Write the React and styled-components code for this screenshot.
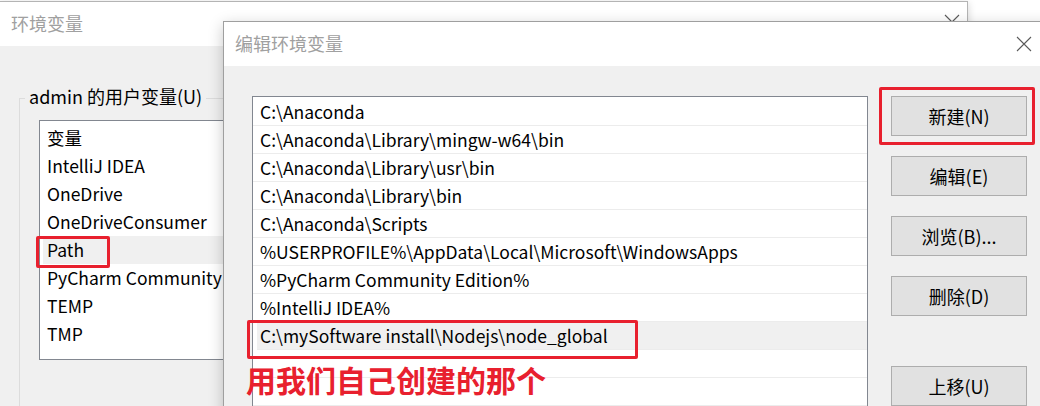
import React from 'react';
import styled, { createGlobalStyle } from 'styled-components';

const GlobalStyle = createGlobalStyle`
  html, body {
    margin: 0;
    padding: 0;
    background: #ffffff;
    overflow: hidden;
  }
  body {
    font-family: "Noto Sans CJK SC", "Microsoft YaHei", sans-serif;
    font-size: 17.5px;
    color: #000;
  }
`;

const userVars = [
  '变量',
  'IntelliJ IDEA',
  'OneDrive',
  'OneDriveConsumer',
  'Path',
  'PyCharm Community Edition',
  'TEMP',
  'TMP',
];

const pathItems = [
  'C:\\Anaconda',
  'C:\\Anaconda\\Library\\mingw-w64\\bin',
  'C:\\Anaconda\\Library\\usr\\bin',
  'C:\\Anaconda\\Library\\bin',
  'C:\\Anaconda\\Scripts',
  '%USERPROFILE%\\AppData\\Local\\Microsoft\\WindowsApps',
  '%PyCharm Community Edition%',
  '%IntelliJ IDEA%',
  'C:\\mySoftware install\\Nodejs\\node_global',
  '',
  '',
];

const buttons = [
  { label: '新建(N)' },
  { label: '编辑(E)' },
  { label: '浏览(B)...' },
  { label: '删除(D)' },
  { label: '上移(U)', spaced: true },
];

function CloseIcon({ size = 16 }) {
  return (
    <svg width={size} height={size} viewBox="0 0 16 16">
      <path d="M1 1 L15 15 M15 1 L1 15" stroke="#5a5a5a" strokeWidth="1.1" fill="none" />
    </svg>
  );
}

export default function App() {
  return (
    <>
      <GlobalStyle />
      <S.Desktop>
        <S.BackWindow>
          <S.TitleBar>
            <S.Title>环境变量</S.Title>
            <S.Close right={-3} up={2}>
              <CloseIcon size={16} />
            </S.Close>
          </S.TitleBar>
          <S.BackBody>
            <S.Group>
              <S.Legend>admin 的用户变量(U)</S.Legend>
              <S.UserList>
                {userVars.map((v) => (
                  <S.UserRow key={v} selected={v === 'Path'}>
                    {v}
                  </S.UserRow>
                ))}
              </S.UserList>
            </S.Group>
          </S.BackBody>
        </S.BackWindow>

        <S.FrontWindow>
          <S.TitleBar>
            <S.Title>编辑环境变量</S.Title>
            <S.Close right={22}>
              <CloseIcon size={16} />
            </S.Close>
          </S.TitleBar>
          <S.FrontBody>
            <S.PathList>
              {pathItems.map((p, i) => (
                <S.PathRow key={i} selected={i === 8}>
                  {p}
                </S.PathRow>
              ))}
            </S.PathList>
            <S.ButtonColumn>
              {buttons.map((b) => (
                <S.Button key={b.label} spaced={b.spaced}>
                  {b.label}
                </S.Button>
              ))}
            </S.ButtonColumn>
          </S.FrontBody>
        </S.FrontWindow>

        <S.Mark style={{ left: 36, top: 236, width: 74, height: 32 }} />
        <S.Mark style={{ left: 247, top: 320, width: 391, height: 39 }} />
        <S.Mark style={{ left: 879, top: 87, width: 156, height: 58 }} />
        <S.Note>用我们自己创建的那个</S.Note>
      </S.Desktop>
    </>
  );
}

const S = {
  Desktop: styled.div`
    position: relative;
    width: 1040px;
    height: 406px;
    overflow: hidden;
    background: #ffffff;
  `,
  BackWindow: styled.div`
    position: absolute;
    left: -1px;
    top: 1px;
    width: 967px;
    height: 460px;
    border: 1px solid #b4b4b4;
    box-shadow: 0 2px 8px rgba(0, 0, 0, 0.18);
    background: #f0f0f0;
    display: flex;
    flex-direction: column;
  `,
  FrontWindow: styled.div`
    position: absolute;
    left: 223px;
    top: 21px;
    width: 840px;
    height: 440px;
    border: 1px solid #9f9f9f;
    box-shadow: 0 4px 14px rgba(0, 0, 0, 0.22);
    background: #f0f0f0;
    display: flex;
    flex-direction: column;
  `,
  TitleBar: styled.div`
    height: 44px;
    flex: none;
    background: #ffffff;
    display: flex;
    align-items: center;
    justify-content: space-between;
    padding: 0 10px 0 11px;
  `,
  Title: styled.div`
    font-size: 18px;
    color: #a0a0a0;
    margin-top: -3px;
  `,
  Close: styled.div`
    display: flex;
    align-items: center;
    margin-right: ${(p) => p.right}px;
    margin-top: ${(p) => (p.up ? -p.up * 2 : 0)}px;
  `,
  BackBody: styled.div`
    flex: 1;
    padding: 42px 0 0 19px;
  `,
  Group: styled.fieldset`
    margin: 0;
    padding: 0;
    width: 400px;
    height: 400px;
    border: 1px solid #dcdcdc;
    border-right: none;
    border-bottom: none;
  `,
  Legend: styled.legend`
    margin-left: 5px;
    padding: 0 4px;
    font-size: 18px;
    line-height: 20px;
    position: relative;
    top: -2px;
  `,
  UserList: styled.div`
    width: 320px;
    height: 235px;
    margin: 12px 0 0 19px;
    background: #ffffff;
    border: 1px solid #828790;
    padding-top: 3px;
  `,
  UserRow: styled.div`
    height: 28px;
    line-height: 28px;
    padding-left: 4px;
    margin-left: 3px;
    white-space: nowrap;
    background: ${(p) => (p.selected ? '#f0f0f0' : 'transparent')};
  `,
  FrontBody: styled.div`
    flex: 1;
    display: flex;
    align-items: flex-start;
    padding: 30px 0 0 28px;
    gap: 23px;
  `,
  PathList: styled.div`
    width: 614px;
    height: 400px;
    background: #ffffff;
    border: 1px solid #828790;
    padding-top: 1px;
  `,
  PathRow: styled.div`
    height: 27px;
    line-height: 27px;
    border-bottom: 1px solid #ececec;
    padding-left: ${(p) => (p.selected ? '3px' : '7px')};
    margin-left: ${(p) => (p.selected ? '4px' : '0')};
    white-space: nowrap;
    background: ${(p) => (p.selected ? '#f0f0f0' : 'transparent')};
  `,
  ButtonColumn: styled.div`
    display: flex;
    flex-direction: column;
    gap: 20px;
  `,
  Button: styled.div`
    width: 134px;
    height: 38px;
    background: #e1e1e1;
    border: 1px solid #adadad;
    display: flex;
    align-items: center;
    justify-content: center;
    font-size: 18px;
    margin-top: ${(p) => (p.spaced ? '30px' : '0')};
  `,
  Mark: styled.div`
    position: absolute;
    box-sizing: border-box;
    border: 3px solid #e8202e;
    border-radius: 2px;
  `,
  Note: styled.div`
    position: absolute;
    left: 246px;
    top: 357px;
    font-size: 30px;
    font-weight: 700;
    color: #e8202e;
    white-space: nowrap;
  `,
};
